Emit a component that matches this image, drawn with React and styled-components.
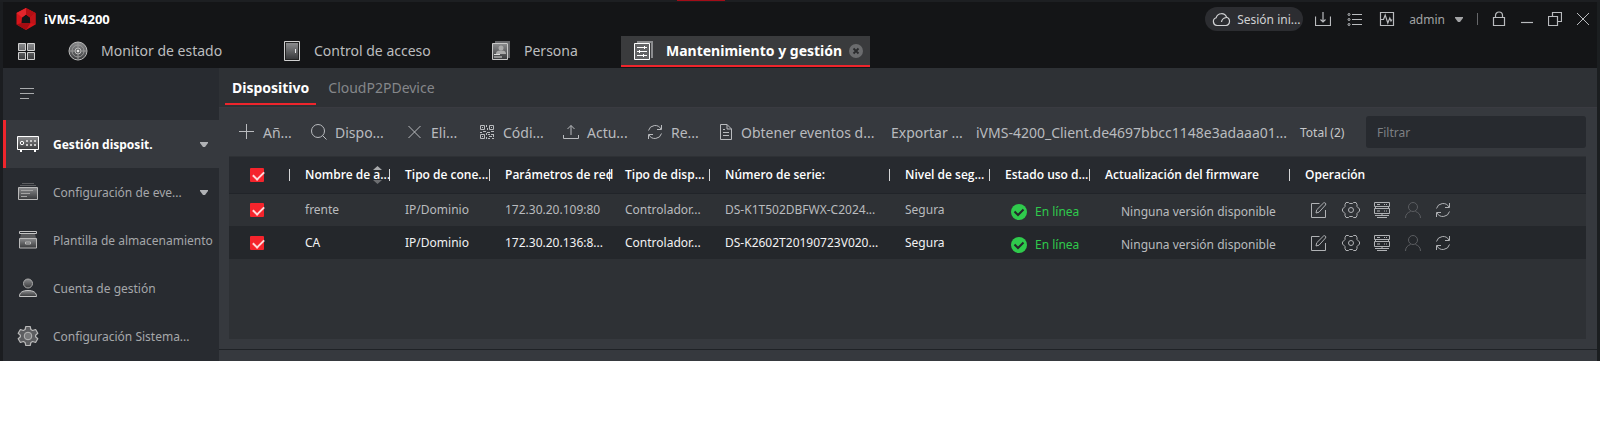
import styled, {createGlobalStyle} from 'styled-components'

const GlobalStyle = createGlobalStyle`
    *{
        box-sizing: border-box;
    }

    body{
        margin: 0;
        background: #fff;
        font-family: "Noto Sans", "Open Sans", sans-serif;
        font-size: 12px;
        color: #b9bbbe;
    }

    button{
        font: inherit;
        color: inherit;
        background: none;
        border: 0;
        padding: 0;
        text-align: left;
        white-space: nowrap;
    }

    a{
        color: inherit;
        text-decoration: none;
    }

    svg{
        display: block;
        flex: none;
    }
`

/* ---------- icons ---------- */

const Line = styled.svg.attrs(p => ({fill: 'none', stroke: p.stroke || 'currentColor'}))`
    width: ${p => p.$w || 16}px;
    height: ${p => p.$h || p.$w || 16}px;
`

function Shade({id}){
    return(
        <defs>
            <linearGradient id={id} x1="0" y1="0" x2="0" y2="1">
                <stop offset="0" stopColor="#8b8c8e"/>
                <stop offset="1" stopColor="#38393b"/>
            </linearGradient>
        </defs>
    )
}

const Logo = () => (
    <Line viewBox="0 0 20 22" $w={20} $h={22} stroke="none">
        <path fill="#d7141a" fillRule="evenodd" d="M10 0 19.500 5V16.500L10 22 .5 16.500V5ZM10 6.500 6 9.500 5.500 15H14.500L14 9.500Z"/>
        <path fill="#e3262c" d="M10 0 .5 5 6 9.500l4-3Z"/>
        <path fill="#b30f14" d="M10 0v6.500l4 3L19.500 5Z"/>
        <path fill="#a40d12" d="M.5 16.500 5.500 15h9L10 22Z"/>
        <path fill="#c01318" d="M14 9.500 19.500 5v11.500L14.500 15Z"/>
    </Line>
)

const CloudIcon = () => (
    <Line viewBox="0 0 19 15" $w={19} $h={15} strokeWidth="1.200">
        <path d="M5 13.500A4 4 0 0 1 4.200 5.700 5.500 5.500 0 0 1 14.600 5.200 4.300 4.300 0 0 1 14 13.500ZM9.500 10c.2-2.200 1.800-4 5-4.500"/>
    </Line>
)

const DownloadIcon = () => (
    <Line viewBox="0 0 16 16"><path d="M.5 5.500v9h15v-9M8 1v10M5.500 8.500 8 11l2.500-2.500" strokeWidth="1.200"/></Line>
)

const ListIcon = () => (
    <Line viewBox="0 0 16 16">
        <path d="M5 3.500h10M5 8.500h10M5 13.500h10"/>
        <circle cx="2" cy="3.500" r="1"/><circle cx="2" cy="8.500" r="1"/><circle cx="2" cy="13.500" r="1"/>
    </Line>
)

const PulseIcon = () => (
    <Line viewBox="0 0 16 16" strokeWidth="1.200">
        <path d="M1.500 1.500h13v13h-13ZM2 8.500h2.500l1.700-4.500 2.600 8 2-5 1.200 3 1-1.500"/>
    </Line>
)

const Caret = () => (
    <Line viewBox="0 0 8 5" $w={8} $h={5} stroke="none"><path fill="currentColor" d="M0 0H8V1L5 5H3L0 1Z"/></Line>
)

const LockIcon = () => (
    <Line viewBox="0 0 14 16" $w={14} $h={16} strokeWidth="1.200"><path d="M1.500 6.500h11v8h-11ZM3.500 6V4.500a3.500 3.500 0 0 1 7 0V6"/></Line>
)

const MinIcon = () => <Line viewBox="0 0 14 14" $w={14}><path d="M1 10.500h12" strokeWidth="1.200"/></Line>

const RestoreIcon = () => (
    <Line viewBox="0 0 14 14" $w={14}><path d="M.5 4.500h9v9h-9ZM4.500 4V.5h9v9H10" strokeWidth="1.200"/></Line>
)

const CloseIcon = () => <Line viewBox="0 0 14 14" $w={14}><path d="M1 1l12 12M13 1 1 13"/></Line>

const GridIcon = () => (
    <Line viewBox="0 0 18 18" $w={18}>
        <Shade id="grid"/>
        <path fill="url(#grid)" stroke="#d0d0d0" d="M.5.5h7v7h-7ZM9.500.5h7v7h-7ZM.5 9.500h7v7h-7ZM9.500 9.500h7v7h-7Z"/>
    </Line>
)

const RadarIcon = () => (
    <Line viewBox="0 0 20 20" $w={20}>
        <Shade id="radar"/>
        <circle cx="10" cy="10" r="9" fill="url(#radar)" stroke="#bbb"/>
        <circle cx="10" cy="10" r="6" stroke="#999"/>
        <circle cx="10" cy="10" r="3" stroke="#bbb"/>
        <path d="M10 2v16M2 10h16" stroke="#999"/>
        <circle cx="10" cy="10" r="1" fill="#fff" stroke="none"/>
    </Line>
)

const DoorIcon = () => (
    <Line viewBox="0 0 18 20" $w={18} $h={20}>
        <Shade id="door"/>
        <path fill="#222" stroke="#d0d0d0" d="M1.500.5h15v19h-15Z"/>
        <path fill="url(#door)" stroke="none" d="M3 2h12v16H3Z"/>
        <path stroke="#e8e8e8" d="M12.500 8v4"/>
    </Line>
)

const PersonIcon = () => (
    <Line viewBox="0 0 20 20" $w={20}>
        <Shade id="person"/>
        <path fill="#66676a" stroke="none" d="M4 0h15v17h-2V2H4Z"/>
        <path fill="url(#person)" stroke="#c8c8c8" d="M1.500 2.500h15v16h-15Z"/>
        <circle cx="10" cy="7" r="2.500" fill="#aaa" stroke="none"/>
        <path fill="#aaa" stroke="none" d="M5 13c0-3 2-3.500 5-3.500s5 .5 5 3.500Z"/>
        <path stroke="#ddd" d="M3 13.500h6M3 16h8"/>
    </Line>
)

const SlidersIcon = () => (
    <Line viewBox="0 0 20 20" $w={20}>
        <path fill="#8c8d8f" stroke="none" d="M4 0h16v17h-2V2H4Z"/>
        <path fill="#626365" stroke="#fff" d="M1.500 2.500h15v16h-15Z"/>
        <path stroke="#fff" d="M4 6.500h10M4 10.500h10M4 14.500h10M11.500 5v3M6.500 9v3M10.500 13v3"/>
    </Line>
)

const ClearIcon = () => (
    <Line viewBox="0 0 14 14" $w={14}>
        <circle cx="7" cy="7" r="7" fill="#6b6c6e" stroke="none"/>
        <path d="M4.500 4.500l5 5M9.500 4.500l-5 5" stroke="#2a2b2d" strokeWidth="1.800"/>
    </Line>
)

const MenuIcon = () => <Line viewBox="0 0 14 12" $w={14} $h={12}><path d="M0 .5h14M0 5.500h14M0 10.500h9"/></Line>

const DeviceIcon = () => (
    <Line viewBox="0 0 22 16" $w={22} $h={16}>
        <Shade id="device"/>
        <path fill="url(#device)" stroke="#fff" d="M.5.5h21v13H.5Z"/>
        <path stroke="#fff" strokeWidth="2" d="M3 15h2M17 15h2"/>
        <circle cx="5" cy="7" r="1.700" stroke="#fff"/>
        <path stroke="#c9c9c9" strokeWidth="2" strokeDasharray="2 2" d="M9 5h10M9 9h10"/>
    </Line>
)

const EventIcon = () => (
    <Line viewBox="0 0 22 18" $w={22} $h={18}>
        <Shade id="event"/>
        <path stroke="#5c5d60" d="M5 .5h12M3 2.500h16"/>
        <path fill="url(#event)" stroke="#b9b9b9" d="M1.500 4.500h19v12h-19Z"/>
        <path stroke="#a4a4a4" d="M4 7.500h12M4 10.500h9M4 13.500h6"/>
    </Line>
)

const StorageIcon = () => (
    <Line viewBox="0 0 22 18" $w={22} $h={18}>
        <Shade id="storage"/>
        <path stroke="#c4c4c4" d="M2.500.5h17v2h-17Z"/>
        <path fill="#5a5b5d" stroke="none" d="M4 3h14l1 4H3Z"/>
        <path fill="url(#storage)" stroke="#b9b9b9" d="M2.500 7.500h17v9.500h-17ZM8.500 11h5v2h-5Z"/>
    </Line>
)

const AccountIcon = () => (
    <Line viewBox="0 0 22 20" $w={22} $h={20}>
        <Shade id="account"/>
        <circle cx="11" cy="5.500" r="4.500" fill="url(#account)" stroke="#aaa"/>
        <path fill="url(#account)" stroke="#c4c4c4" d="M2.500 18.500c0-4 3-6 8.500-6s8.500 2 8.500 6Z"/>
    </Line>
)

const SettingsIcon = () => (
    <Line viewBox="0 0 22 22" $w={22}>
        <path fill="#5d5e61" stroke="#b9b9b9" strokeWidth="1.200" strokeLinejoin="round" d="M8.800 1.500h4.400l.7 3 1.700 1 3-1 2.200 3.800-2.200 2v1.400l2.200 2-2.200 3.800-3-1-1.700 1-.7 3H8.800l-.7-3-1.700-1-3 1-2.200-3.800 2.200-2v-1.400l-2.200-2 2.200-3.800 3 1 1.700-1Z"/>
        <circle cx="11" cy="11" r="3.800" fill="#77787a" stroke="#b9b9b9"/>
    </Line>
)

const PlusIcon = () => <Line viewBox="0 0 16 16"><path d="M0 7.500h15M7.500 0v15"/></Line>
const SearchIcon = () => <Line viewBox="0 0 16 16"><circle cx="7" cy="7" r="6.500"/><path d="M11.500 11.500 15.500 15.500"/></Line>
const DeleteIcon = () => <Line viewBox="0 0 16 16"><path d="M1.500 2l12 12M13.500 2l-12 12"/></Line>

const QrIcon = () => (
    <Line viewBox="0 0 16 16">
        <path d="M1.500 1.500h4v4h-4ZM10.500 1.500h4v4h-4ZM1.500 10.500h4v4h-4Z"/>
        <path d="M3 3.500h1M12 3.500h1M3 12.500h1M7.500 1v2M8.500 4v2M1 8.500h2M4 7.500h3M8 8.500h3M12 7.500h3M7.500 9v2M7.500 13v2M9 10.500h2M12 10.500h3M10 12.500h3M9 14.500h2M13 14.500h2M14.500 11v2"/>
    </Line>
)

const UploadIcon = () => <Line viewBox="0 0 16 16"><path d="M.5 11v3.500h15V11M8 11V1.500M4.500 5 8 1.500 11.500 5"/></Line>

const RefreshIcon = () => (
    <Line viewBox="0 0 16 16"><path d="M1.500 6.500a6.800 6.800 0 0 1 12.500-1.500M14.500 1v4.500H10M14.500 9.500a6.800 6.800 0 0 1-12.500 1.500M1.500 15v-4.500H6"/></Line>
)

const FileIcon = () => (
    <Line viewBox="0 0 14 16" $w={14} $h={16}><path d="M1.500.5H8L12.500 5v10.500h-11ZM8 .5V5h4.500M4 5.500h2M4 8.500h6M4 11.500h6"/></Line>
)

const EditIcon = () => (
    <Line viewBox="0 0 16 16"><path d="M8.500 1.500h-8v14h14V8M5 11l.7-3.200L12.500 1c1.200-1 3.200.7 2 2L8 10.200 5 11Z"/></Line>
)

const ConfigIcon = () => (
    <Line viewBox="0 0 18 18" $w={18}>
        <path strokeLinejoin="round" d="M4 1.500H6.500L7.500 2.500h3L11.500 1.500H14L15 3.500V5.500L17.500 8v2L15 12.500v2L14 16.500H11.500L10.500 15.500h-3L6.500 16.500H4L3 14.500v-2L.5 10V8L3 5.500v-2Z"/>
        <circle cx="9" cy="9" r="2.500"/>
    </Line>
)

const ServerIcon = () => (
    <Line viewBox="0 0 16 16"><path d="M.5.5h15v4H.5ZM1.500 4.500v2M14.500 4.500v2M.5 6.500h15v5H.5ZM8 11.500v2M1 13.500h14M3 15.500h10M3 2.500h3M3 9h3M10 2.500h1M12 2.500h1M10 9h1M12 9h1"/></Line>
)

const UserIcon = () => (
    <Line viewBox="0 0 16 16"><circle cx="8" cy="5" r="4.500"/><path d="M.5 16c0-3.500 2-5.500 5-6.500M15.500 16c0-3.500-2-5.500-5-6.500"/></Line>
)

const OkIcon = () => (
    <Line viewBox="0 0 16 16">
        <circle cx="8" cy="8" r="8" fill="#2fca4c" stroke="none"/>
        <path d="M3.500 7.500 7 11l5.500-5.500" stroke="#24272b" strokeWidth="2"/>
    </Line>
)

const SortIcon = () => (
    <Line viewBox="0 0 9 18" $w={9} $h={18} stroke="none">
        <path fill="#a9abad" d="M0 4 4.500 0 9 4Z"/>
        <path fill="#6d6f72" d="M0 14h9l-4.500 4Z"/>
    </Line>
)

/* ---------- window ---------- */

const Window = styled.div`
    background: #141517;
    border-left: 3px solid #1b1d20;
    border-right: 3px solid #1b1e20;
`

const TopEdge = styled.div`
    height: 2px;
    margin: 0 -3px;
    padding-left: 42.5%;
    background: #1d1f22;

    &:before{
        content: '';
        display: block;
        width: 48px;
        height: 1px;
        background: #a30d18;
    }
`

const TitleBar = styled.header`
    height: 34px;
    padding: 0 7px 0 13px;
    display: flex;
    align-items: center;
    justify-content: space-between;
`

const Brand = styled.div`
    display: flex;
    align-items: center;
    gap: 8px;
    color: #fff;
    font-family: "Open Sans", sans-serif;
    font-size: 13px;
    font-weight: 700;
`

const TitleTools = styled.div`
    display: flex;
    align-items: center;
    color: #b9bbbe;
    gap: ${p => p.$gap}px;
`

const Session = styled.button`
    height: 24px;
    width: 98px;
    border-radius: 12px;
    background: #2c2d31;
    display: flex;
    align-items: center;
    gap: 6px;
    padding-left: 7px;
    color: #d0d1d3;
`

const UserButton = styled.button`
    display: flex;
    align-items: center;
    gap: 10px;
    color: #a2a3a5;
`

const Divider = styled.span`
    width: 1px;
    height: 12px;
    background: #66676a;
`

const TabBar = styled.nav`
    height: 32px;
    display: flex;
    align-items: stretch;
    padding-left: 15px;
`

const HomeButton = styled.button`
    width: 38px;
`

const Tab = styled.button`
    width: ${p => p.$width}px;
    height: 31px;
    display: flex;
    align-items: center;
    gap: 13px;
    padding: 0 7px 0 12px;
    font-size: 14px;
    color: ${p => p.$active ? '#fff' : '#bcbdbf'};
    font-weight: ${p => p.$active ? 700 : 400};
    background: ${p => p.$active ? '#3a3b3d' : 'none'};
    border-bottom: 2px solid ${p => p.$active ? '#ee252c' : 'transparent'};
`

const TabClose = styled.span`
    margin-left: -6px;
`

const Body = styled.div`
    display: flex;
`

/* ---------- sidebar ---------- */

const Sidebar = styled.nav`
    flex: none;
    width: 216px;
    background: #282b30;
`

const Collapse = styled.button`
    display: flex;
    align-items: center;
    width: 100%;
    height: 52px;
    padding-left: 17px;
    color: #a9abad;
`

const SideItem = styled.a`
    height: 48px;
    display: flex;
    align-items: center;
    gap: 14px;
    padding: 0 11px 0 ${p => p.$active ? 11 : 14}px;
    white-space: nowrap;
    color: ${p => p.$active ? '#fff' : '#a5a7aa'};
    font-weight: ${p => p.$active ? 700 : 400};
    background: ${p => p.$active ? '#36393e' : 'none'};
    border-left: ${p => p.$active ? '3px solid #ee252c' : 0};
`

const More = styled.span`
    margin-left: auto;
    color: #b0b2b5;
`

/* ---------- main ---------- */

const Main = styled.main`
    flex: 1;
    min-width: 0;
    background: #36393e;
`

const SubTabs = styled.div`
    height: 40px;
    display: flex;
    padding-left: 6px;
    background: #2e3135;
    border-bottom: 1px solid #3a3b41;
`

const SubTab = styled.button`
    height: 37px;
    padding: 4px 7px 0;
    margin-right: 5px;
    font-size: 14px;
    color: ${p => p.$active ? '#fff' : '#85878a'};
    font-weight: ${p => p.$active ? 700 : 400};
    border-bottom: 2px solid ${p => p.$active ? '#ee252c' : 'transparent'};
`

const Toolbar = styled.div`
    height: 48px;
    display: flex;
    align-items: center;
    padding: 0 11px 0 20px;
`

const Tool = styled.button`
    width: ${p => p.$width}px;
    display: flex;
    align-items: center;
    gap: 8px;
    font-size: 14px;
`

const Total = styled.span`
    white-space: nowrap;
    color: #c6c7c9;
`

const Filter = styled.input`
    width: 220px;
    height: 32px;
    margin-left: auto;
    padding: 0 11px;
    border: 0;
    border-radius: 3px;
    background: #272a2f;
    color: #c6c7c9;
    font: inherit;

    &::placeholder{
        color: #7e8083;
        opacity: 1;
    }
`

const TablePanel = styled.div`
    min-height: 183px;
    margin: 0 11px 10px 10px;
    background: #2e3135;
    border-top: 1px solid #2e3135;
`

const Table = styled.table`
    width: 100%;
    border-collapse: collapse;
    table-layout: fixed;
`

const Col = styled.col`
    width: ${p => p.$width ? `${p.$width}px` : 'auto'};
`

const HeadCell = styled.th`
    height: 36px;
    padding: 0 0 0 ${p => p.$check ? 21 : 15}px;
    background: #272a2f;
    border-bottom: 1px solid #212429;
    color: #fff;
    font-family: "Open Sans", sans-serif;
    font-size: 12px;
    font-weight: 600;
    text-align: left;
    white-space: nowrap;
`

const HeadInner = styled.div`
    position: relative;
    height: 12px;
    display: flex;
    align-items: center;
    border-right: ${p => p.$last ? 0 : '1px solid #d5d6d8'};

    svg{
        position: absolute;
        right: 7px;
        top: -3px;
    }

    span{
        position: relative;
    }
`

const Row = styled.tr`
    height: 33px;
    background: ${p => p.$selected ? '#24272b' : '#2e3135'};
    color: ${p => p.$selected ? '#f2f2f3' : '#b9bbbe'};
`

const Cell = styled.td`
    padding: 0 0 0 ${p => p.$pad || 15}px;
    white-space: nowrap;
    color: ${p => p.$muted ? '#b9bbbe' : 'inherit'};
`

const Check = styled.input`
    appearance: none;
    display: block;
    flex: none;
    width: 14px;
    height: 14px;
    margin: 0;
    border-radius: 1px;
    background: #f5242c;

    &:checked:after{
        content: '';
        display: block;
        width: 9px;
        height: 5px;
        margin: 3px;
        border: solid #ffd9da;
        border-width: 0 0 2px 2px;
        transform: rotate(-45deg);
    }
`

const Status = styled.div`
    display: flex;
    align-items: center;
    gap: 8px;
    padding-top: 4px;
    color: #2fca4c;
`

const Firmware = styled.div`
    padding-top: 4px;
`

const Actions = styled.div`
    display: flex;
    align-items: center;
    justify-content: space-between;
    width: 140px;
    color: #b0b2b5;
`

const Action = styled.button`
    &:disabled{
        color: #5b5d61;
    }
`

const Footer = styled.div`
    height: 12px;
    border-top: 1px solid #1f2226;
`

const tabs = [
    {label: 'Monitor de estado', icon: RadarIcon, width: 215},
    {label: 'Control de acceso', icon: DoorIcon, width: 208},
    {label: 'Persona', icon: PersonIcon, width: 142},
    {label: 'Mantenimiento y gestión', icon: SlidersIcon, width: 249, active: true},
]

const sideItems = [
    {label: 'Gestión disposit.', icon: DeviceIcon, active: true, more: true},
    {label: 'Configuración de eve...', icon: EventIcon, more: true},
    {label: 'Plantilla de almacenamiento', icon: StorageIcon},
    {label: 'Cuenta de gestión', icon: AccountIcon},
    {label: 'Configuración Sistema...', icon: SettingsIcon},
]

const tools = [
    {label: 'Añ...', icon: PlusIcon, width: 72},
    {label: 'Dispo...', icon: SearchIcon, width: 96},
    {label: 'Eli...', icon: DeleteIcon, width: 72},
    {label: 'Códi...', icon: QrIcon, width: 84},
    {label: 'Actu...', icon: UploadIcon, width: 84},
    {label: 'Re...', icon: RefreshIcon, width: 72},
    {label: 'Obtener eventos d...', icon: FileIcon, width: 172},
    {label: 'Exportar ...', width: 85},
    {label: 'iVMS-4200_Client.de4697bbcc1148e3adaaa01...', width: 324},
]

const columns = [
    {label: 'Nombre de a...', width: 100, sort: true},
    {label: 'Tipo de cone...', width: 100},
    {label: 'Parámetros de red', width: 120},
    {label: 'Tipo de disp...', width: 100},
    {label: 'Número de serie:', width: 180},
    {label: 'Nivel de seg...', width: 100},
    {label: 'Estado uso d...', width: 100},
    {label: 'Actualización del firmware', width: 200},
    {label: 'Operación'},
]

const devices = [
    {name: 'frente', address: '172.30.20.109:80', serial: 'DS-K1T502DBFWX-C2024...'},
    {name: 'CA', address: '172.30.20.136:8...', serial: 'DS-K2602T20190723V020...', selected: true},
]

function DeviceRow({device}){
    return(
        <Row $selected={device.selected}>
            <Cell $pad={21}><Check type="checkbox" defaultChecked aria-label={device.name}/></Cell>
            <Cell>{device.name}</Cell>
            <Cell>IP/Dominio</Cell>
            <Cell>{device.address}</Cell>
            <Cell>Controlador...</Cell>
            <Cell>{device.serial}</Cell>
            <Cell>Segura</Cell>
            <Cell $pad={21}><Status><OkIcon/>En línea</Status></Cell>
            <Cell $pad={31} $muted><Firmware>Ninguna versión disponible</Firmware></Cell>
            <Cell $pad={21}>
                <Actions>
                    <Action aria-label="Editar"><EditIcon/></Action>
                    <Action aria-label="Configurar"><ConfigIcon/></Action>
                    <Action aria-label="Estado"><ServerIcon/></Action>
                    <Action aria-label="Usuario" disabled><UserIcon/></Action>
                    <Action aria-label="Actualizar"><RefreshIcon/></Action>
                </Actions>
            </Cell>
        </Row>
    )
}

function App(){
    return(
        <>
            <GlobalStyle/>
            <Window>
                <TopEdge/>
                <TitleBar>
                    <Brand><Logo/>iVMS-4200</Brand>
                    <TitleTools $gap={14}>
                        <TitleTools $gap={16}>
                            <TitleTools $gap={12}>
                                <Session><CloudIcon/>Sesión ini...</Session>
                                <button aria-label="Descargas"><DownloadIcon/></button>
                            </TitleTools>
                            <button aria-label="Tareas"><ListIcon/></button>
                            <button aria-label="Monitor"><PulseIcon/></button>
                        </TitleTools>
                        <UserButton>admin <Caret/></UserButton>
                        <Divider/>
                        <button aria-label="Bloquear"><LockIcon/></button>
                        <button aria-label="Minimizar"><MinIcon/></button>
                        <button aria-label="Restaurar"><RestoreIcon/></button>
                        <button aria-label="Cerrar"><CloseIcon/></button>
                    </TitleTools>
                </TitleBar>
                <TabBar>
                    <HomeButton aria-label="Inicio"><GridIcon/></HomeButton>
                    {tabs.map(({label, icon: Icon, width, active}) => (
                        <Tab key={label} $width={width} $active={active}>
                            <Icon/>
                            {label}
                            {active && <TabClose><ClearIcon/></TabClose>}
                        </Tab>
                    ))}
                </TabBar>
                <Body>
                    <Sidebar>
                        <Collapse aria-label="Contraer menú"><MenuIcon/></Collapse>
                        {sideItems.map(({label, icon: Icon, active, more}) => (
                            <SideItem key={label} href="#" $active={active}>
                                <Icon/>
                                {label}
                                {more && <More><Caret/></More>}
                            </SideItem>
                        ))}
                    </Sidebar>
                    <Main>
                        <SubTabs>
                            <SubTab $active>Dispositivo</SubTab>
                            <SubTab>CloudP2PDevice</SubTab>
                        </SubTabs>
                        <Toolbar>
                            {tools.map(({label, icon: Icon, width}) => (
                                <Tool key={label} $width={width}>
                                    {Icon && <Icon/>}
                                    {label}
                                </Tool>
                            ))}
                            <Total>Total (2)</Total>
                            <Filter type="text" placeholder="Filtrar" aria-label="Filtrar"/>
                        </Toolbar>
                        <TablePanel>
                            <Table>
                                <colgroup>
                                    <Col $width={61}/>
                                    {columns.map(c => <Col key={c.label} $width={c.width}/>)}
                                </colgroup>
                                <thead>
                                    <tr>
                                        <HeadCell $check>
                                            <HeadInner>
                                                <Check type="checkbox" defaultChecked aria-label="Seleccionar todo"/>
                                            </HeadInner>
                                        </HeadCell>
                                        {columns.map(c => (
                                            <HeadCell key={c.label}>
                                                <HeadInner $last={!c.width}>
                                                    {c.sort && <SortIcon/>}
                                                    <span>{c.label}</span>
                                                </HeadInner>
                                            </HeadCell>
                                        ))}
                                    </tr>
                                </thead>
                                <tbody>
                                    {devices.map(d => <DeviceRow key={d.name} device={d}/>)}
                                </tbody>
                            </Table>
                        </TablePanel>
                        <Footer/>
                    </Main>
                </Body>
            </Window>
        </>
    )
}

export default App
